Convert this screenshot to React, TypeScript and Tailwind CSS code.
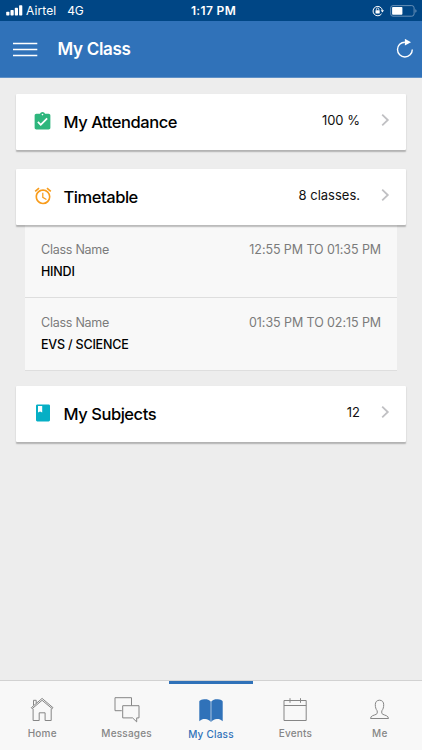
import type { ReactNode } from 'react';
import { MdAccessAlarm, MdAssignmentTurnedIn } from 'react-icons/md';

interface ClassPeriod {
  name: string;
  time: string;
}

const periods: ClassPeriod[] = [
  { name: 'HINDI', time: '12:55 PM TO 01:35 PM' },
  { name: 'EVS / SCIENCE', time: '01:35 PM TO 02:15 PM' },
];

function StatusBar() {
  return (
    <div className="h-[21px] bg-[#004685] text-white grid grid-cols-3 items-center pl-1.5 pr-[5px]">
      <div className="flex items-center">
        <svg width="17" height="11" viewBox="0 0 17 11" fill="currentColor">
          <rect x="0.2" y="6.7" width="3.2" height="3.8" rx="0.7" />
          <rect x="4.5" y="5" width="3.2" height="5.5" rx="0.7" />
          <rect x="8.8" y="2.8" width="3.2" height="7.7" rx="0.7" />
          <rect x="13.1" y="0.3" width="3.2" height="10.2" rx="0.7" />
        </svg>
        <span className="ml-[3px] text-[12px] leading-none tracking-[0.1px]">Airtel</span>
        <span className="ml-[11px] text-[12px] leading-none tracking-[-0.3px]">4G</span>
      </div>
      <div className="pl-1 text-center text-[12px] leading-none font-semibold tracking-[0.35px]">1:17 PM</div>
      <div className="flex items-center justify-end">
        <svg width="12" height="12" viewBox="0 0 12 12" fill="none" stroke="currentColor" strokeWidth="1">
          <path d="M9.6 8.8A4.7 4.7 0 1 1 10.4 5.4" />
          <path d="M8.7 5.3h3.3l-1.6 2.1z" fill="currentColor" stroke="none" />
          <rect x="3.5" y="5.2" width="4.2" height="3.2" rx="0.4" fill="currentColor" stroke="none" />
          <path d="M4.4 5.3V4.2a1.2 1.2 0 0 1 2.4 0v1.1" strokeWidth="0.8" />
        </svg>
        <svg className="ml-1.5" width="27" height="12" viewBox="0 0 27 12" fill="none">
          <rect x="0.7" y="0.6" width="23.4" height="10.6" rx="2.3" stroke="#6790b7" />
          <rect x="2.1" y="2" width="10.3" height="7.8" rx="0.8" fill="white" />
          <path d="M25.3 4.2c1 .3 1.2 1 1.2 1.7s-.2 1.4-1.2 1.7z" fill="#6790b7" />
        </svg>
      </div>
    </div>
  );
}

function Header() {
  return (
    <header className="h-[57px] bg-[#3072b9] border-b border-[#5e90c7] text-white flex items-center pl-[13px] pr-2">
      <svg className="mt-px" width="25" height="16" viewBox="0 0 25 16" stroke="currentColor" strokeWidth="1.6">
        <path d="M0 1.5h24.3M0 7.5h24.3M0 13.5h24.3" />
      </svg>
      <h1 className="ml-[19.5px] flex-1 text-[17px] leading-none font-semibold tracking-[-0.3px]">My Class</h1>
      <svg width="18" height="20" viewBox="0 0 18 20" fill="none" stroke="currentColor" strokeWidth="1.4">
        <path d="M8.9 3.2A7.4 7.4 0 1 0 16.3 10.6" />
        <path d="M8.9 -0.2 15 3.2 8.9 6.6z" fill="currentColor" stroke="none" />
      </svg>
    </header>
  );
}

function BookIcon() {
  return (
    <svg width="14" height="18" viewBox="0 0 14 18" fill="#06afc5">
      <path
        fillRule="evenodd"
        d="M1.3.4h11.4c.7 0 1.3.6 1.3 1.3v14.4c0 .7-.6 1.3-1.3 1.3H1.3C.6 17.4 0 16.8 0 16.1V1.7C0 1 .6.4 1.3.4zM2 2v6.5l2.1-1 2.1 1V2z"
      />
    </svg>
  );
}

interface SectionCardProps {
  icon: ReactNode;
  title: string;
  value: string;
}

function SectionCard({ icon, title, value }: SectionCardProps) {
  return (
    <div className="relative h-14 bg-white rounded-[1px] shadow-[0_1.5px_1.5px_rgba(0,0,0,0.25)] flex items-center pl-4 pr-[15.5px]">
      <div className="w-[21px] mb-0.5 flex justify-center">{icon}</div>
      <h2 className="ml-[10.5px] flex-1 text-[16.5px] leading-5 font-[450] text-black tracking-[-0.45px]">{title}</h2>
      <span className="mb-1 text-[13px] leading-4 text-[#111]">{value}</span>
      <svg className="ml-[21px] mb-[5px]" width="9" height="14" viewBox="0 0 9 14" fill="none" stroke="#c0c0c3" strokeWidth="1.8">
        <path d="M1.2 1.7 6.8 7l-5.6 5.3" />
      </svg>
    </div>
  );
}

function PeriodRow({ name, time }: ClassPeriod) {
  return (
    <li className="pt-[17px] px-4 h-[73px] border-b border-[#dedede]">
      <div className="flex justify-between text-[12.5px] leading-4 text-[#7b7b7b]">
        <span className="tracking-[-0.25px]">Class Name</span>
        <span className="tracking-[-0.08px]">{time}</span>
      </div>
      <div className="mt-1.5 text-[12.5px] leading-4 font-medium text-black tracking-[-0.2px]">{name}</div>
    </li>
  );
}

const tabs: { label: string; active?: boolean; icon: ReactNode }[] = [
  {
    label: 'Home',
    icon: <path d="M4.1 10.8v11.7h6.1v-7.7h5.9v7.7h6.1V10.8M3.1 10.7 13.1 2.3l10.1 8.4.8-1L13.1.4 2.3 9.7zM4.5 7.4V2.3h2.7v3" />,
  },
  {
    label: 'Messages',
    icon: <path d="M7.8 12.7H1V-.3h16.5v7.8M8.7 7.7H25v12.2h-2.3v4l-4.1-4H8.7z" />,
  },
  {
    label: 'My Class',
    active: true,
    icon: (
      <path
        d="M12.7 2.5C11.2.9 9.3.3 6.9.3 4.2.3 1.3 1.2 1.3 2.7v19.5c2-1.7 4-2.3 5.9-2.1 2.4.2 4.5 1.3 5.5 2.9zM13.3 2.5C14.8.9 16.7.3 19.1.3c2.7 0 5.6.9 5.6 2.4v19.5c-2-1.7-4-2.3-5.9-2.1-2.4.2-4.5 1.3-5.5 2.9z"
        fill="currentColor"
        stroke="none"
      />
    ),
  },
  {
    label: 'Events',
    icon: <path d="M2 2.5h22.2v20H2zM2 7.5h22.2M8 .2v4.6M18.5.2v4.6" />,
  },
  {
    label: 'Me',
    icon: (
      <path d="M12.5 2.2c-2.7 0-4.2 1.8-4.2 4.5 0 2.500.6 4.500 1.8 6 .4 2.100.2 3-.9 3.600-2.600 1.300-5.400 1.200-5.700 4.200h18c-.3-3-3.100-2.900-5.700-4.200-1.100-.6-1.300-1.500-.9-3.600 1.200-1.500 1.800-3.500 1.800-6 0-2.700-1.500-4.500-4.200-4.500z" />
    ),
  },
];

function TabBar() {
  return (
    <nav className="h-[70px] bg-[#f8f8f8] border-t border-[#d2d2d2] grid grid-cols-5">
      {tabs.map((tab) => (
        <div
          key={tab.label}
          className={
            tab.active
              ? 'border-t-[3px] border-[#3072b9] text-[#3072b9] flex flex-col items-center pt-[15px]'
              : 'text-[#868686] flex flex-col items-center pt-[17px]'
          }
        >
          <svg className="overflow-visible" width="26" height="25" viewBox="0 0 26 25" fill="none" stroke="currentColor" strokeWidth="1">
            {tab.icon}
          </svg>
          <span className="mt-1 text-[10px] leading-3 font-medium tracking-[0.2px]">{tab.label}</span>
        </div>
      ))}
    </nav>
  );
}

export default function App() {
  return (
    <div className="h-[750px] w-full flex flex-col bg-[#ededed] font-['Inter',sans-serif]">
      <StatusBar />
      <Header />
      <main className="flex-1 pl-4 pr-[16.5px] pt-4">
        <SectionCard icon={<MdAssignmentTurnedIn size={21} className="text-[#2eb67d]" />} title="My Attendance" value="100 %" />
        <div className="mt-[19px]">
          <SectionCard icon={<MdAccessAlarm size={20} className="text-[#f89c1c]" />} title="Timetable" value="8 classes." />
          <ul className="ml-[9px] mr-[8.5px] bg-[#f8f8f8]">
            {periods.map((period) => (
              <PeriodRow key={period.time} {...period} />
            ))}
          </ul>
        </div>
        <div className="mt-[15.4px]">
          <SectionCard icon={<BookIcon />} title="My Subjects" value="12" />
        </div>
      </main>
      <TabBar />
    </div>
  );
}
